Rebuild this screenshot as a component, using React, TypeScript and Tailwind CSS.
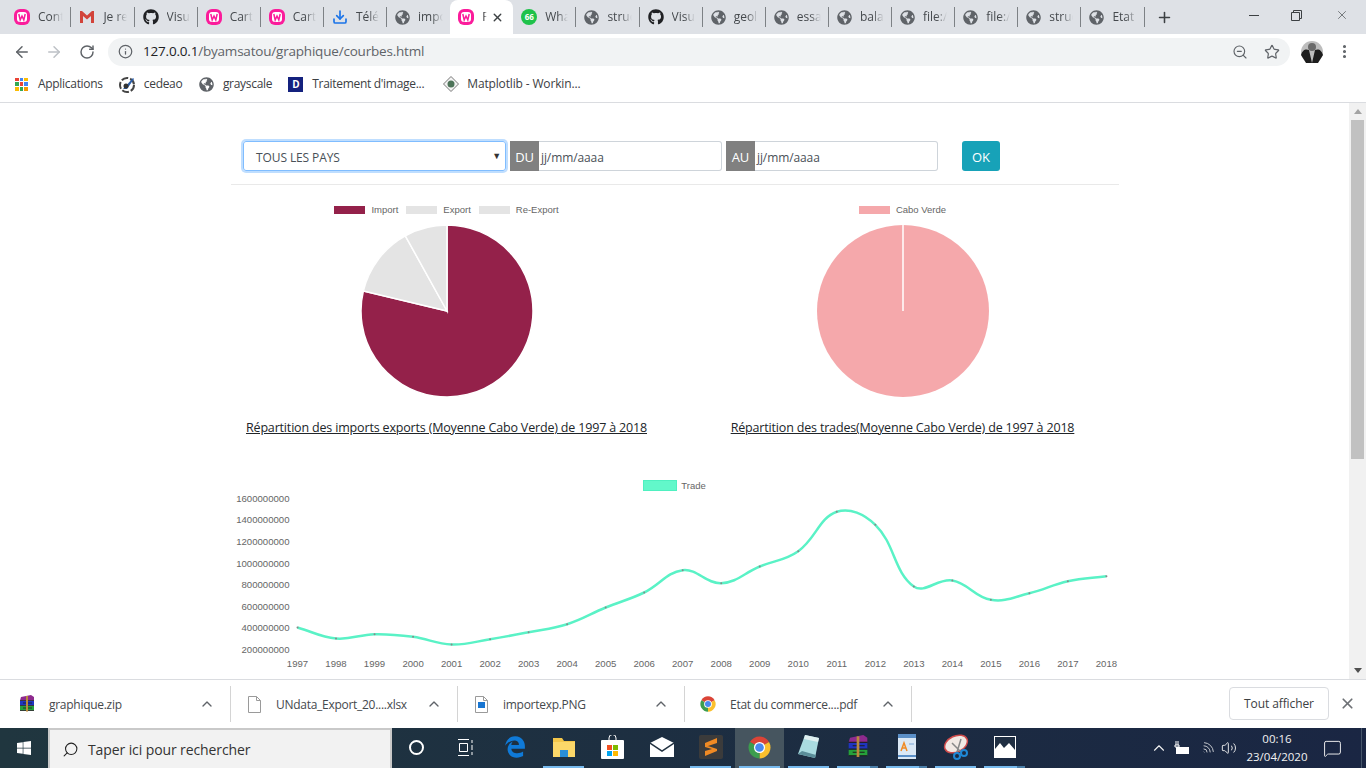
import { ArrowLeft, ArrowRight, ChevronUp, Download, Info, MessageSquare, MoreVertical, Plus, RotateCw, Search, Star, Volume2, Wifi, X, ZoomOut } from "lucide-react";
import { FaEdgeLegacy, FaGithub, FaGlobeAmericas, FaWindows } from "react-icons/fa";
import type { ReactNode } from "react";

function polar(cx: number, cy: number, r: number, deg: number) {
  const a = ((deg - 90) * Math.PI) / 180;
  return [cx + r * Math.cos(a), cy + r * Math.sin(a)];
}

function sector(cx: number, cy: number, r: number, from: number, to: number) {
  const [x1, y1] = polar(cx, cy, r, from);
  const [x2, y2] = polar(cx, cy, r, to);
  const large = to - from > 180 ? 1 : 0;
  return `M${cx} ${cy}L${x1} ${y1}A${r} ${r} 0 ${large} 1 ${x2} ${y2}Z`;
}

// favicons
function Wamp() {
  return (
    <svg width="16" height="16" viewBox="0 0 16 16" className="shrink-0">
      <rect width="16" height="16" rx="6" fill="#fb1c9b" />
      <rect x="3" y="3" width="10" height="10" rx="3" fill="#fff" />
      <path d="M4.8 5l1.4 6 1.8-4 1.8 4 1.4-6" fill="none" stroke="#fb1c9b" strokeWidth="1.5" />
    </svg>
  );
}

function Gmail() {
  return (
    <svg width="16" height="14" viewBox="0 0 16 14" className="shrink-0">
      <path d="M1 1v12h3V6l4 3.500 4-3.500v7h3V1h-2L8 5.500 3 1z" fill="#d2433a" />
    </svg>
  );
}

function Globe() {
  return <FaGlobeAmericas size={15} className="shrink-0 text-[#5f6368]" />;
}

function Chrome({ size = 16 }: { size?: number }) {
  return (
    <svg width={size} height={size} viewBox="0 0 24 24" className="shrink-0">
      <path d={sector(12, 12, 11.500, -60, 60)} fill="#db4437" />
      <path d={sector(12, 12, 11.500, 60, 180)} fill="#fbc02d" />
      <path d={sector(12, 12, 11.500, 180, 300)} fill="#3c9d4e" />
      <circle cx="12" cy="12" r="5.800" fill="#fff" />
      <circle cx="12" cy="12" r="4.500" fill="#4a88ee" />
    </svg>
  );
}

function Winrar({ size = 18 }: { size?: number }) {
  return (
    <svg width={size} height={size} viewBox="0 0 18 18" className="shrink-0">
      <path d="M3 2l10-2 3 2v3.500H2z" fill="#8e2a8e" />
      <rect x="2" y="6" width="14" height="4.500" fill="#1f35c0" />
      <rect x="2" y="11" width="14" height="4.500" fill="#25a03a" />
      <path d="M2 5.500h14M2 10.500h14M2 15.500h14M5 8h9M5 13h9" stroke="#1c1c1c" strokeWidth=".8" />
      <rect x="8" y="1" width="2" height="15.500" fill="#b98a3c" />
    </svg>
  );
}

function FileIcon({ children }: { children?: ReactNode }) {
  return (
    <svg width="13" height="17" viewBox="0 0 13 17" className="shrink-0">
      <path d="M.5.5h8l4 4v12H.5z" fill="#fff" stroke="#9a9a9a" />
      <path d="M8.500.5v4h4" fill="none" stroke="#9a9a9a" />
      {children}
    </svg>
  );
}

const tabs: { icon: ReactNode; label: string; active?: boolean }[] = [
  { icon: <Wamp />, label: "Cont" },
  { icon: <Gmail />, label: "Je re" },
  { icon: <FaGithub size={16} className="shrink-0 text-[#202124]" />, label: "Visu" },
  { icon: <Wamp />, label: "Cart" },
  { icon: <Wamp />, label: "Cart" },
  { icon: <Download size={16} strokeWidth={2.5} className="shrink-0 text-[#1a73e8]" />, label: "Télé" },
  { icon: <Globe />, label: "impo" },
  { icon: <Wamp />, label: "F", active: true },
  {
    icon: (
      <span className="flex size-4 shrink-0 items-center justify-center rounded-full bg-[#1fc24b] text-[8px] font-bold text-white">
        66
      </span>
    ),
    label: "Wha",
  },
  { icon: <Globe />, label: "struc" },
  { icon: <FaGithub size={16} className="shrink-0 text-[#202124]" />, label: "Visu" },
  { icon: <Globe />, label: "geol" },
  { icon: <Globe />, label: "essa" },
  { icon: <Globe />, label: "bala" },
  { icon: <Globe />, label: "file:/" },
  { icon: <Globe />, label: "file:/" },
  { icon: <Globe />, label: "struc" },
  { icon: <Globe />, label: "Etat" },
];

function TabStrip() {
  return (
    <div className="flex h-[34px] items-stretch bg-[#dee1e6] pl-[6px] text-[12px] text-[#45494d]">
      {tabs.map((tab, i) => {
        const beforeActive = tabs[i + 1]?.active;
        return (
          <div
            key={i}
            className={`flex items-center ${i === 0 ? "w-[65.400px]" : "w-[63.130px]"} ${
              tab.active ? "rounded-t-[8px] bg-white text-[#202124]" : ""
            }`}
          >
            <div className={`flex min-w-0 flex-1 items-center gap-[8px] pl-[8px] ${tab.active ? "pr-[2px]" : "pr-[7px]"}`}>
              {tab.icon}
              <span
                className={`min-w-0 flex-1 overflow-hidden whitespace-nowrap ${
                  tab.active
                    ? "[mask-image:linear-gradient(to_right,black_20%,transparent_70%)]"
                    : "[mask-image:linear-gradient(to_right,black_55%,transparent)]"
                }`}
              >
                {tab.label}
              </span>
            </div>
            {tab.active ? (
              <X size={13} strokeWidth={2.5} className="mr-[9px] shrink-0 text-[#3c4043]" />
            ) : !beforeActive ? (
              <div className="h-[20px] w-px shrink-0 bg-[#7d8185]" />
            ) : null}
          </div>
        );
      })}
      <div className="flex w-[40px] items-center justify-center">
        <Plus size={17} strokeWidth={2.2} className="text-[#3c4043]" />
      </div>
      <div className="ml-auto flex items-start">
        <div className="flex h-[30px] w-[40px] items-center justify-center">
          <div className="h-px w-[10px] bg-[#3c4043]" />
        </div>
        <div className="flex h-[30px] w-[44px] items-center justify-center">
          <svg width="11" height="11" viewBox="0 0 11 11" fill="none" stroke="#3c4043">
            <path d="M.5 2.500h8v8h-8zM2.500 2.500v-2h8v8h-2" />
          </svg>
        </div>
        <div className="flex h-[30px] w-[48px] items-center justify-center">
          <X size={14} strokeWidth={1.1} className="text-[#3c4043]" />
        </div>
      </div>
    </div>
  );
}

function Toolbar() {
  return (
    <div className="flex h-[34px] items-center bg-white pl-[6px] pt-px">
      <div className="flex w-[32px] justify-center">
        <ArrowLeft size={18} strokeWidth={2} className="text-[#5f6368]" />
      </div>
      <div className="flex w-[32px] justify-center">
        <ArrowRight size={18} strokeWidth={2} className="text-[#bdc1c6]" />
      </div>
      <div className="flex w-[34px] justify-center">
        <RotateCw size={16} strokeWidth={2.2} className="text-[#5f6368]" />
      </div>
      <div className="ml-[4px] flex h-[28px] w-[1182px] items-center rounded-full bg-[#f1f3f4] pl-[10px] pr-[9px]">
        <Info size={15} strokeWidth={2} className="text-[#5f6368]" />
        <div className="ml-[10px] text-[13.500px] tracking-[-0.2px] text-[#5f6368]">
          <span className="text-[#202124]">127.0.0.1</span>/byamsatou/graphique/courbes.html
        </div>
        <ZoomOut size={16} strokeWidth={1.7} className="ml-auto text-[#5f6368]" />
        <Star size={16} strokeWidth={1.8} className="ml-[16px] mr-[1px] text-[#5f6368]" />
      </div>
      <svg width="22" height="22" viewBox="0 0 22 22" className="ml-[11px] shrink-0">
        <circle cx="11" cy="11" r="11" fill="#bdbdbd" />
        <path d="M0 14c2-6 5-6 8-5l3 13H5zM22 14c-2-6-5-6-8-5l-3 13h6z" fill="#1d1d1d" />
        <circle cx="11" cy="6" r="4" fill="#6a6a6a" />
      </svg>
      <MoreVertical size={17} strokeWidth={2.4} className="ml-[13px] text-[#5f6368]" />
    </div>
  );
}

function AppsIcon() {
  const colors = ["#ea4335", "#4285f4", "#fbbc05", "#34a853", "#ea4335", "#4285f4", "#fbbc05", "#34a853", "#f29900"];
  return (
    <div className="grid size-[13px] shrink-0 grid-cols-3 gap-px">
      {colors.map((c, i) => (
        <div key={i} style={{ background: c }} />
      ))}
    </div>
  );
}

function Bookmark({ icon, label, className }: { icon: ReactNode; label: string; className: string }) {
  return (
    <div className={`flex items-center ${className}`}>
      {icon}
      <span className="whitespace-nowrap">{label}</span>
    </div>
  );
}

function BookmarkBar() {
  return (
    <div className="flex h-[35px] items-center border-b border-[#dadce0] bg-white pb-[2px] text-[12px] tracking-[-0.3px] text-[#3c4043]">
      <Bookmark className="ml-[15px] gap-[10px]" icon={<AppsIcon />} label="Applications" />
      <Bookmark
        className="ml-[16px] gap-[8px]"
        icon={
          <svg width="17" height="17" viewBox="0 0 17 17" className="shrink-0">
            <circle cx="8" cy="9" r="7" fill="none" stroke="#444" strokeWidth="2" strokeDasharray="7 2" />
            <path d="M4 13L14 2l1 1-7 10z" fill="#2c5ea8" />
            <circle cx="7" cy="10" r="2.500" fill="#333" />
          </svg>
        }
        label="cedeao"
      />
      <Bookmark className="ml-[17px] gap-[8.500px]" icon={<Globe />} label="grayscale" />
      <Bookmark
        className="ml-[16px] gap-[9px]"
        icon={
          <span className="flex size-[15px] shrink-0 items-center justify-center bg-[#14217e] text-[10px] font-bold text-white">
            D
          </span>
        }
        label="Traitement d'image..."
      />
      <Bookmark
        className="ml-[19px] gap-[8px] tracking-[-0.15px]"
        icon={
          <svg width="16" height="16" viewBox="0 0 16 16" className="shrink-0">
            <path d="M8 .5L15.500 8 8 15.500.5 8z" fill="#f3f3f3" stroke="#777" />
            <circle cx="8" cy="8" r="3.500" fill="#4d7358" />
          </svg>
        }
        label="Matplotlib - Workin..."
      />
    </div>
  );
}

function FilterBar() {
  return (
    <div className="flex h-[30px] items-stretch pl-[12.500px] text-[12px] tracking-[-0.1px] text-[#495057]">
      <div className="flex w-[263px] items-center justify-between rounded-[3px] border border-[#80bdff] pl-[12px] pr-[4px] shadow-[0_0_0_2px_rgba(0,123,255,0.25)]">
        <span className="pt-[3px]">TOUS LES PAYS</span>
        <span className="text-[9px] text-[#333]">▼</span>
      </div>
      <DateField label="DU" className="ml-[4px]" />
      <DateField label="AU" className="ml-[4px]" />
      <div className="ml-[24px] flex w-[38px] items-center justify-center rounded-[3px] bg-[#17a2b8] pt-[3px] text-[13px] text-white">
        OK
      </div>
    </div>
  );
}

function DateField({ label, className }: { label: string; className: string }) {
  return (
    <div className={`flex w-[212px] ${className}`}>
      <div className="flex w-[29px] items-center justify-center bg-[#808080] pt-[3px] text-[13px] text-white">{label}</div>
      <div className="flex flex-1 items-center rounded-r-[3px] border border-l-0 border-[#ced4da] pl-[2px] pt-[3px]">
        jj/mm/aaaa
      </div>
    </div>
  );
}

function Legend({ items, className }: { items: { label: string; bg: string }[]; className: string }) {
  return (
    <div className={`flex items-center justify-center gap-[8px] font-['Liberation_Sans',sans-serif] text-[9.500px] text-[#666] ${className}`}>
      {items.map((it) => (
        <div key={it.label} className="flex items-center gap-[6px]">
          <div className={`h-[8px] w-[31px] ${it.bg}`} />
          <span>{it.label}</span>
        </div>
      ))}
    </div>
  );
}

function PieCol({ legend, caption, slices, line }: {
  legend: { label: string; bg: string }[];
  caption: string;
  slices: { from: number; to: number; fill: string }[];
  line?: boolean;
}) {
  return (
    <div className="flex flex-col items-center">
      <Legend items={legend} className="h-[12px]" />
      <svg width="176" height="176" viewBox="-88 -88 176 176" className="mt-[7px]">
        {slices.map((s, i) =>
          s.to - s.from >= 360 ? (
            <circle key={i} r="86" fill={s.fill} />
          ) : (
            <path key={i} d={sector(0, 0, 86, s.from, s.to)} fill={s.fill} stroke="#fff" strokeWidth="1.500" />
          ),
        )}
        {line && <path d="M0 0V-86" stroke="#fff" strokeWidth="1.500" />}
      </svg>
      <div className="mt-[20px] text-[12.500px] tracking-[-0.17px] text-[#212529] underline">{caption}</div>
    </div>
  );
}

const trade = [627, 638, 633.7, 636.3, 644, 638.7, 631.7, 623.7, 607, 592, 569.7, 582.7, 566, 550.7, 511.3, 524.3, 586, 580, 599.300, 592.7, 580.7, 575.7];
const yLabels = ["1600000000", "1400000000", "1200000000", "1000000000", "800000000", "600000000", "400000000", "200000000"];

// same bezier as a chart.js line with tension 0.4
function splinePath(pts: number[][]) {
  const cp = pts.map((p, i) => {
    const prev = pts[i - 1] ?? p;
    const next = pts[i + 1] ?? p;
    const d1 = Math.hypot(p[0] - prev[0], p[1] - prev[1]);
    const d2 = Math.hypot(next[0] - p[0], next[1] - p[1]);
    const total = d1 + d2 || 1;
    const dx = next[0] - prev[0];
    const dy = next[1] - prev[1];
    return {
      before: [p[0] - (0.4 * d1 * dx) / total, p[1] - (0.4 * d1 * dy) / total],
      after: [p[0] + (0.4 * d2 * dx) / total, p[1] + (0.4 * d2 * dy) / total],
    };
  });
  let d = `M${pts[0][0]} ${pts[0][1]}`;
  for (let i = 1; i < pts.length; i++) {
    d += `C${cp[i - 1].after[0]} ${cp[i - 1].after[1]} ${cp[i].before[0]} ${cp[i].before[1]} ${pts[i][0]} ${pts[i][1]}`;
  }
  return d;
}

function LineChart() {
  const pts = trade.map((y, i) => [297 + i * 38.52, y]);
  return (
    <div>
      <div className="flex items-center justify-center gap-[4px] font-['Liberation_Sans',sans-serif] text-[9.500px] text-[#666]">
        <div className="h-[11px] w-[34px] border border-[#4ff0c0] bg-[#62f8ca]" />
        <span>Trade</span>
      </div>
      <svg width="888" height="184" viewBox="230.500 492.500 888 184" className="font-['Liberation_Sans',sans-serif] text-[9.600px]" fill="#666">
        {yLabels.map((l, i) => (
          <text key={l} x="289" y={501.300 + i * 21.6} textAnchor="end">{l}</text>
        ))}
        {pts.map((p, i) => (
          <text key={i} x={p[0]} y="666" textAnchor="middle">{1997 + i}</text>
        ))}
        <path d={splinePath(pts)} fill="none" stroke="#5af2c6" strokeWidth="2.500" />
        {pts.map((p, i) => (
          <circle key={i} cx={p[0]} cy={p[1]} r="1" fill="#888" />
        ))}
      </svg>
    </div>
  );
}

function Scrollbar() {
  return (
    <div className="flex w-[17px] shrink-0 flex-col items-center bg-[#f1f1f1]">
      <div className="mt-[6px] h-0 w-0 border-x-[4px] border-b-[5px] border-x-transparent border-b-[#a3a3a3]" />
      <div className="mt-[6px] h-[339px] w-[13px] bg-[#c1c1c1]" />
      <div className="mb-[6px] mt-auto h-0 w-0 border-x-[4px] border-t-[5px] border-x-transparent border-t-[#505050]" />
    </div>
  );
}

function Page() {
  const pieA = [
    { from: 0, to: 283.5, fill: "#94214a" },
    { from: 283.5, to: 331, fill: "#e4e4e4" },
    { from: 331, to: 360, fill: "#e4e4e4" },
  ];
  return (
    <div className="flex min-h-0 flex-1 bg-white">
      <div className="min-w-0 flex-1 overflow-hidden">
        <div className="mx-auto w-[888px] pt-[38px]">
          <FilterBar />
          <div className="mt-[13px] border-t border-[#e9e9e9]" />
          <div className="-mx-[12px] mt-[19px] grid grid-cols-2">
            <PieCol
              legend={[
                { label: "Import", bg: "bg-[#94214a]" },
                { label: "Export", bg: "bg-[#e4e4e4]" },
                { label: "Re-Export", bg: "bg-[#e4e4e4]" },
              ]}
              caption="Répartition des imports exports (Moyenne Cabo Verde) de 1997 à 2018"
              slices={pieA}
            />
            <PieCol
              legend={[{ label: "Cabo Verde", bg: "bg-[#f5a8ab]" }]}
              caption="Répartition des trades(Moyenne Cabo Verde) de 1997 à 2018"
              slices={[{ from: 0, to: 360, fill: "#f5a8ab" }]}
              line
            />
          </div>
          <div className="mt-[41px]">
            <LineChart />
          </div>
        </div>
      </div>
      <Scrollbar />
    </div>
  );
}

function DownloadItem({ icon, label, className }: { icon: ReactNode; label: string; className: string }) {
  return (
    <div className={`my-[6px] flex items-center border-r border-[#d4d4d4] pr-[15px] ${className}`}>
      <div className="flex w-[18px] justify-center">{icon}</div>
      <span className="ml-[13px] whitespace-nowrap pt-px">{label}</span>
      <ChevronUp size={16} strokeWidth={2} className="ml-auto text-[#5f6368]" />
    </div>
  );
}

function DownloadBar() {
  return (
    <div className="flex h-[49px] items-stretch border-t border-[#dadce0] bg-white text-[12px] tracking-[-0.28px] text-[#45494d]">
      <DownloadItem className="w-[231px] pl-[18px]" icon={<Winrar />} label="graphique.zip" />
      <DownloadItem className="w-[227px] pl-[14px]" icon={<FileIcon />} label="UNdata_Export_20....xlsx" />
      <DownloadItem
        className="w-[227px] pl-[14px]"
        icon={
          <FileIcon>
            <rect x="3" y="6" width="7" height="6" fill="#1976d2" />
          </FileIcon>
        }
        label="importexp.PNG"
      />
      <DownloadItem className="w-[227px] pl-[14px]" icon={<Chrome />} label="Etat du commerce....pdf" />
      <div className="ml-auto mt-[7px] flex h-[33px] w-[100px] items-center justify-center rounded-[4px] border border-[#dadce0] tracking-[-0.1px] text-[#3c4043]">
        Tout afficher
      </div>
      <div className="flex w-[37px] items-center justify-center pb-[1px]">
        <X size={17} strokeWidth={2.4} className="text-[#6e7175]" />
      </div>
    </div>
  );
}

function Slot({ children, run, multi, active }: { children: ReactNode; run?: boolean; multi?: boolean; active?: boolean }) {
  return (
    <div className={`flex h-full w-[49px] flex-col items-center ${active ? "bg-[#46555f]" : ""}`}>
      <div className="flex flex-1 items-center justify-center">{children}</div>
      <div className="flex h-[2px] w-[41px]">
        {run && <div className="flex-1 bg-[#76b9ed]" />}
        {multi && <div className="w-[8px] bg-[#4a7ea8]" />}
      </div>
    </div>
  );
}

function Taskbar() {
  return (
    <div className="flex h-[40px] items-stretch bg-linear-to-r from-[#20363f] to-[#1a2643] text-white">
      <div className="flex w-[48px] items-center justify-center">
        <FaWindows size={16} />
      </div>
      <div className="flex w-[344px] items-center gap-[9px] border-2 border-b-0 border-[#c9c9c9] bg-[#f2f2f2] pl-[12px] text-[14px] text-[#333]">
        <Search size={17} strokeWidth={1.5} className="-scale-x-100 text-[#222]" />
        <span className="tracking-[-0.1px]">Taper ici pour rechercher</span>
      </div>
      <Slot>
        <div className="size-[15px] rounded-full border-[2.5px] border-white" />
      </Slot>
      <Slot>
        <svg width="18" height="17" viewBox="0 0 18 17" fill="none" stroke="#fff">
          <path d="M1 .5h11M1 16.500h11M2.500 4.500h8v8h-8zM15 1v3M15 6v5M15 13v3" />
        </svg>
      </Slot>
      <Slot>
        <FaEdgeLegacy size={22} className="text-[#0f7ad8]" />
      </Slot>
      <Slot run>
        <svg width="22" height="20" viewBox="0 0 22 20">
          <path d="M0 1h9l2 3h11v16H0z" fill="#f3c64a" />
          <rect y="5" width="22" height="15" fill="#fbd769" />
          <path d="M7 13h8v7H7z" fill="#2a8fd8" />
        </svg>
      </Slot>
      <Slot>
        <svg width="23" height="24" viewBox="0 0 23 24">
          <rect y="5" width="23" height="19" rx="1" fill="#fff" />
          <path d="M8 7V3a3.500 3.500 0 017 0v4" fill="none" stroke="#fff" />
          <rect x="6" y="10" width="5" height="5" fill="#f25022" />
          <rect x="12" y="10" width="5" height="5" fill="#7fba00" />
          <rect x="6" y="16" width="5" height="5" fill="#00a4ef" />
          <rect x="12" y="16" width="5" height="5" fill="#ffb900" />
        </svg>
      </Slot>
      <Slot>
        <svg width="24" height="20" viewBox="0 0 24 20">
          <path d="M0 6L12 0l12 6v14H0z" fill="#fff" />
          <path d="M0 6l12 8 12-8" fill="none" stroke="#20303f" strokeWidth="1.500" />
        </svg>
      </Slot>
      <Slot run>
        <div className="flex size-[24px] items-center justify-center rounded-[2px] bg-[#3b3b3b]">
          <svg width="12" height="18" viewBox="0 0 12 18">
            <path d="M12 0v5L0 9V5zM0 7l12 4v2L0 18v-5l7-2-7-2z" fill="#f08a24" />
          </svg>
        </div>
      </Slot>
      <Slot run active>
        <Chrome size={23} />
      </Slot>
      <Slot run>
        <svg width="24" height="26" viewBox="0 0 24 26">
          <path d="M8 1l14 3-4 20L1 20z" fill="#a9dbe0" />
          <path d="M8 1l14 3-1 4L7 5z" fill="#dfeff0" />
          <path d="M1 20l17 4 1-3-14-4z" fill="#5a8d99" />
        </svg>
      </Slot>
      <Slot run multi>
        <Winrar size={24} />
      </Slot>
      <Slot run multi>
        <svg width="20" height="26" viewBox="0 0 20 26">
          <rect x="1" width="18" height="25" fill="#dbe8f5" />
          <rect x="1" width="18" height="4" fill="#5b8fc7" />
          <path d="M4 17l3-8 3 8M5 14h4" fill="none" stroke="#f08a24" strokeWidth="1.500" />
          <path d="M12 10h5" stroke="#7aa6d6" />
          <path d="M1 22h18" stroke="#5b8fc7" strokeWidth="2" />
        </svg>
      </Slot>
      <Slot run>
        <svg width="26" height="26" viewBox="0 0 26 26">
          <ellipse cx="13" cy="10" rx="12" ry="8" fill="#f1e9e4" stroke="#cf4a4a" strokeWidth="1.500" transform="rotate(-25 13 10)" />
          <path d="M9 9l9 9M18 5l-4 13" stroke="#888" strokeWidth="1.500" />
          <circle cx="14" cy="22" r="3" fill="none" stroke="#1e88d6" strokeWidth="2" />
          <circle cx="21" cy="19" r="3" fill="none" stroke="#1e88d6" strokeWidth="2" />
        </svg>
      </Slot>
      <Slot run multi>
        <svg width="22" height="22" viewBox="0 0 22 22">
          <rect x=".5" y=".5" width="21" height="21" fill="#1f2e42" stroke="#fff" />
          <path d="M1 21V13l5-6 4 5 2-2 3-3 6 7v7z" fill="#fff" />
        </svg>
      </Slot>
      <div className="ml-auto flex items-center text-[#f2f2f2]">
        <ChevronUp size={18} strokeWidth={1.5} />
        <svg width="16" height="14" viewBox="0 0 16 14" className="ml-[5px]" fill="none" stroke="#fff">
          <path d="M3 0v4M5 0v4M2 4h4v2H2zM4 6v1" />
          <rect x="3.500" y="6.500" width="12" height="6" fill="#fff" />
        </svg>
        <Wifi size={15} strokeWidth={1.5} className="ml-[11px] rotate-45 opacity-80" />
        <Volume2 size={16} strokeWidth={1.4} className="ml-[6px]" />
        <div className="ml-[8px] flex w-[64px] flex-col items-center text-[11.500px] leading-[18px]">
          <span>00:16</span>
          <span>23/04/2020</span>
        </div>
        <MessageSquare size={19} strokeWidth={1.2} className="ml-[14px]" />
        <div className="ml-[19px] mr-[4px] h-full w-px bg-[#46566a]" />
      </div>
    </div>
  );
}

export default function App() {
  return (
    <div className="flex h-[768px] w-[1366px] flex-col overflow-hidden bg-white font-['Open_Sans',sans-serif]">
      <TabStrip />
      <Toolbar />
      <BookmarkBar />
      <Page />
      <DownloadBar />
      <Taskbar />
    </div>
  );
}
